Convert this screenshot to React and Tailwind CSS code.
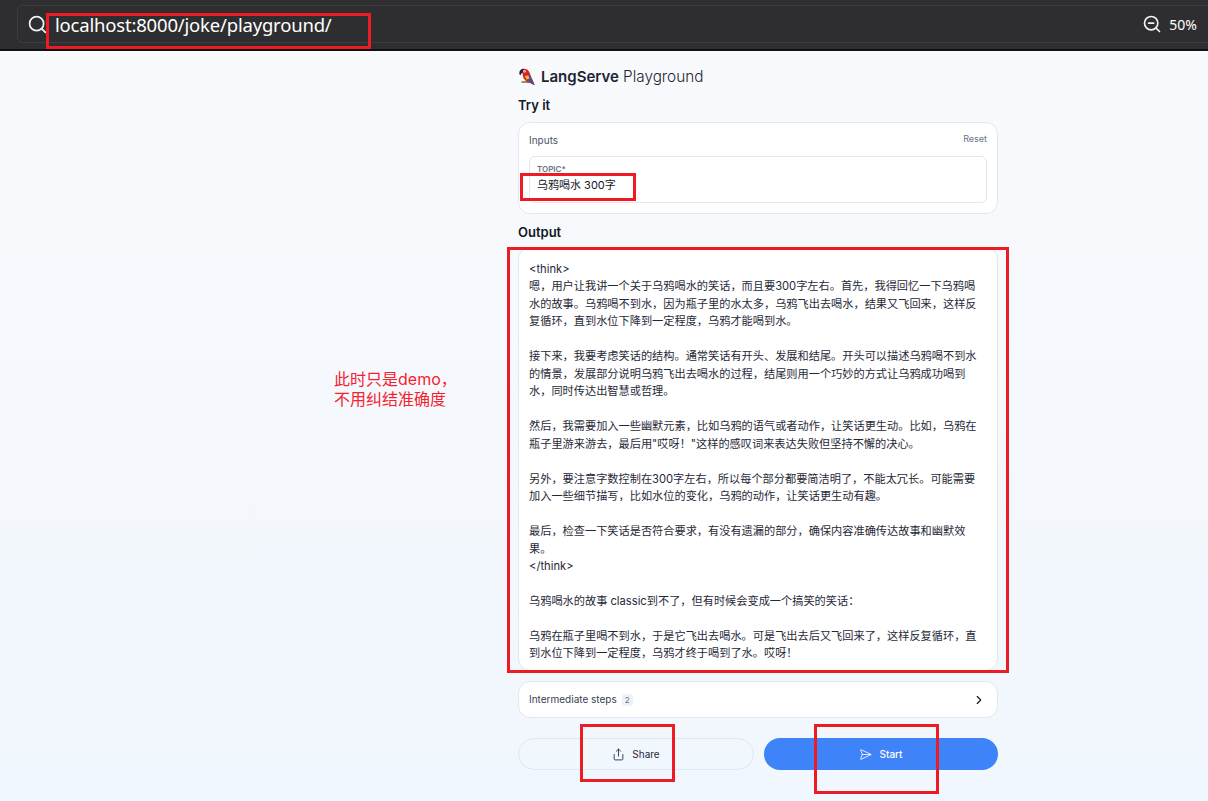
import React from 'react';
import { Search, ZoomOut, ChevronRight, Share, SendHorizontal } from 'lucide-react';

const cjk = { fontFamily: 'Inter, "Noto Sans CJK SC", sans-serif' };

const outputText = `<think>
嗯，用户让我讲一个关于乌鸦喝水的笑话，而且要300字左右。首先，我得回忆一下乌鸦喝
水的故事。乌鸦喝不到水，因为瓶子里的水太多，乌鸦飞出去喝水，结果又飞回来，这样反
复循环，直到水位下降到一定程度，乌鸦才能喝到水。

接下来，我要考虑笑话的结构。通常笑话有开头、发展和结尾。开头可以描述乌鸦喝不到水
的情景，发展部分说明乌鸦飞出去喝水的过程，结尾则用一个巧妙的方式让乌鸦成功喝到
水，同时传达出智慧或哲理。

然后，我需要加入一些幽默元素，比如乌鸦的语气或者动作，让笑话更生动。比如，乌鸦在
瓶子里游来游去，最后用"哎呀！"这样的感叹词来表达失败但坚持不懈的决心。

另外，要注意字数控制在300字左右，所以每个部分都要简洁明了，不能太冗长。可能需要
加入一些细节描写，比如水位的变化，乌鸦的动作，让笑话更生动有趣。

最后，检查一下笑话是否符合要求，有没有遗漏的部分，确保内容准确传达故事和幽默效
果。
</think>

乌鸦喝水的故事 classic到不了，但有时候会变成一个搞笑的笑话：

乌鸦在瓶子里喝不到水，于是它飞出去喝水。可是飞出去后又飞回来了，这样反复循环，直
到水位下降到一定程度，乌鸦才终于喝到了水。哎呀！`;

const Parrot = () => (
  <svg width="18" height="18" viewBox="0 0 17 18">
    <path d="M4.500 .8c3-.6 5.500 1 6.500 3.700l2 5 3.500 7.800-4.500-2.300-3.500-.8-3.500-4L4 6z" fill="#dc2228" />
    <path d="M9 8l2.300-.8 2.200 5.300 2 4.800-4-2.500z" fill="#2459b0" />
    <path d="M6.300 8l3.500-.6 1.200 3-3 1z" fill="#f0bb2c" />
    <path d="M5 .8C2.700.8.800 2.700.800 5c0 1.100.5 2 1.200 2.600C2 6.300 2.800 5.300 4.200 5z" fill="#262626" />
    <circle cx="6" cy="3.200" r="1.200" fill="#f4f4f4" />
    <circle cx="6" cy="3.200" r=".45" fill="#222" />
    <path d="M3 13.300h7.500v1.400H3z" fill="#6f6234" />
  </svg>
);

const RedBox = ({ className }) => (
  <div className={`absolute border-[3px] border-[#ed1c24] pointer-events-none ${className}`} />
);

export default function App() {
  return (
    <div className="relative h-[801px] w-[1208px] overflow-hidden bg-gradient-to-b from-[#f9fafc] to-[#f1f7fe]" style={cjk}>
      {/* browser bar */}
      <header className="h-[51px] bg-[#2e2e31] border-b-2 border-[#111113] pl-[17px] pt-[5px]">
        <div className="flex items-center h-[38px] rounded-l-[6px] border border-r-0 border-[#3c3c40] pl-[9px] pr-[11px] text-white">
          <Search size={21} strokeWidth={2} className="text-[#f1f1f1]" />
          <span className="ml-[7px] mt-[2px] text-[18.500px] tracking-[-0.19px]" style={{ fontFamily: '"Noto Sans", sans-serif' }}>localhost:8000/joke/playground/</span>
          <ZoomOut size={20} strokeWidth={2} className="ml-auto text-[#f1f1f1]" />
          <span className="ml-[7px] text-[14px]" style={{ fontFamily: '"Noto Sans", sans-serif' }}>50%</span>
        </div>
      </header>

      <main className="w-[480px] ml-[518px]">
        <div className="flex items-center h-[18px] mt-[17px]">
          <Parrot />
          <h1 className="ml-[5px] text-[15px] text-[#1c2433]"><span className="font-semibold">LangServe</span> <span className="font-light text-[15.300px]">Playground</span></h1>
        </div>
        <h2 className="mt-[10px] text-[13px] leading-[18px] font-semibold text-[#111827]">Try it</h2>

        <section className="mt-[8px] h-[92px] rounded-[12px] border border-[#e2e8f0] bg-white px-[10px] pt-[10px]">
          <div className="flex justify-between items-center h-[14px] text-[#4b5563]">
            <span className="text-[10px]">Inputs</span>
            <span className="text-[9px] text-[#64748b] -mt-[2px]">Reset</span>
          </div>
          <div className="mt-[9px] h-[47px] rounded-[6px] border border-[#e2e8f0] px-[7px] pt-[8px]">
            <div className="text-[8px] leading-[8px] font-semibold text-[#64748b]">TOPIC*</div>
            <div className="mt-[4px] text-[11px] leading-[16px] text-[#111827]">乌鸦喝水 300字</div>
          </div>
        </section>

        <h2 className="mt-[9px] text-[13px] leading-[18px] font-semibold text-[#111827]">Output</h2>

        <section className="mt-[6px] h-[424px] rounded-[12px] border border-[#e2e8f0] bg-white pl-[10px] pt-[13px] overflow-hidden">
          <div className="whitespace-pre-wrap text-[11.200px] leading-[17.470px] text-[#1f2937]">{outputText}</div>
        </section>

        <section className="mt-[10px] flex items-center justify-between h-[37px] rounded-[12px] border border-[#e2e8f0] bg-white pl-[10px] pr-[11px]">
          <div className="flex items-center text-[10px] text-[#374151]">
            Intermediate steps
            <span className="ml-[5px] rounded-[3px] bg-[#eef2f7] px-[3px] text-[8px] leading-[12px] text-[#64748b]">2</span>
          </div>
          <ChevronRight size={14} strokeWidth={2} className="text-[#111827]" />
        </section>

        <div className="mt-[20px] flex gap-[10px]">
          <button className="flex flex-1 items-center justify-center gap-[7px] h-[32px] rounded-full border border-[#e2e8f0] text-[10px] text-[#1f2937]">
            <Share size={13} strokeWidth={1.600} />
            Share
          </button>
          <button className="flex flex-1 items-center justify-center gap-[7px] h-[32px] rounded-full bg-[#3f83f8] text-[10px] font-medium text-white">
            <SendHorizontal size={13} strokeWidth={1.500} />
            Start
          </button>
        </div>
      </main>

      {/* annotations */}
      <div className="absolute left-[334px] top-[369px] text-[16px] leading-[20px] text-[#f5222d]">
        此时只是demo，<br />不用纠结准确度
      </div>
      <RedBox className="left-[46px] top-[13px] w-[325px] h-[36px]" />
      <RedBox className="left-[520px] top-[173px] w-[116px] h-[28px]" />
      <RedBox className="left-[507px] top-[247px] w-[502px] h-[426px]" />
      <RedBox className="left-[580px] top-[724px] w-[95px] h-[58px]" />
      <RedBox className="left-[814px] top-[724px] w-[125px] h-[70px]" />
    </div>
  );
}
